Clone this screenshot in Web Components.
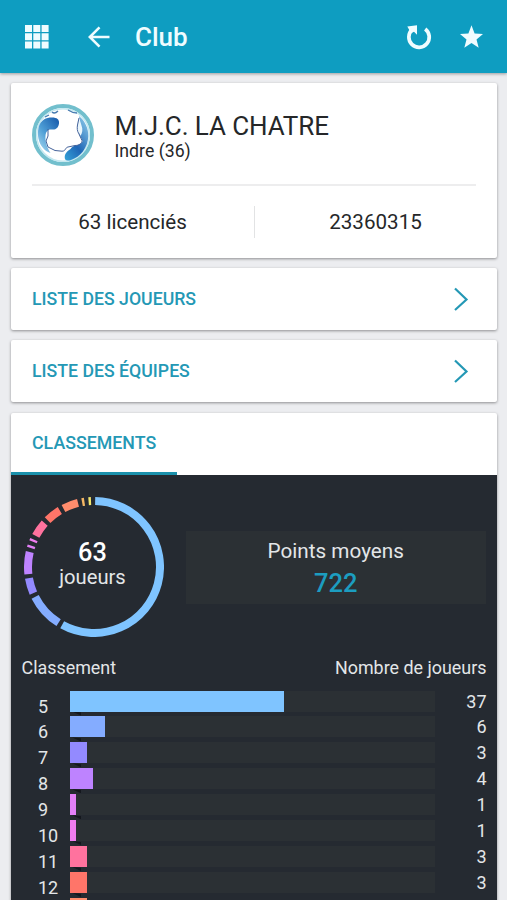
<!DOCTYPE html>
<html lang="fr">
<head>
<meta charset="utf-8">
<meta name="viewport" content="width=device-width, initial-scale=1">
<title>Club</title>
<style>
  html, body {
    margin: 0;
    height: 900px;
    overflow: hidden;
    background: #ecedf0;
    font-family: Roboto, "Liberation Sans", sans-serif;
    color: #252729;
  }
</style>
</head>
<body>
<club-app></club-app>

<script>
class AppToolbar extends HTMLElement {
  constructor() {
    super();
    this.attachShadow({ mode: 'open' });
  }

  connectedCallback() {
    this.shadowRoot.innerHTML = `
      <style>
        :host {
          display: flex;
          align-items: center;
          box-sizing: border-box;
          height: 72.500px;
          padding: 1px 23.500px 0 24px;
          background: #0e9dc1;
          color: #effcff;
          box-shadow: 0 1px 3px rgba(0,0,0,.35);
        }
        svg { display: block; fill: currentColor; flex: none; }
        .back { margin-left: 38px; }
        h1 {
          flex: 1;
          margin: 0 0 0 24px;
          font-size: 26px;
          line-height: 30px;
          font-weight: 500;
        }
        .star { margin-left: 26.500px; }
      </style>
      <svg width="26" height="26" viewBox="0 0 26 26">
        <path d="M1 1h7v7H1zM9.300 1h7v7h-7zM17.600 1h7v7h-7zM1 9.300h7v7H1zM9.300 9.300h7v7h-7zM17.600 9.300h7v7h-7zM1 17.600h7v7H1zM9.300 17.600h7v7h-7zM17.600 17.600h7v7h-7z"/>
      </svg>
      <svg class="back" width="23" height="24" viewBox="0 0 23 24">
        <path d="M11.500 2.300 1.800 12l9.700 9.700M2 12h19.500" fill="none" stroke="currentColor" stroke-width="2.600"/>
      </svg>
      <h1><slot></slot></h1>
      <svg width="26" height="26" viewBox="0 0 26 26">
        <path d="M6.300 5.500A10.200 10.200 0 1 0 19.200 5" fill="none" stroke="currentColor" stroke-width="3.700"/>
        <path d="M1.300 2.500 11 1.200v9.600L8 7.800 5 9z"/>
      </svg>
      <svg class="star" width="25" height="26" viewBox="0 0 25 26">
        <path d="M12.500 1.200 15.600 9.500l8.400.4-6.500 5.500 2.200 8.300-7.200-4.700-7.200 4.700 2.200-8.300L1 9.900l8.400-.4z"/>
      </svg>
    `;
  }
}

class PanelCard extends HTMLElement {
  constructor() {
    super();
    this.attachShadow({ mode: 'open' });
    this.shadowRoot.innerHTML = `
      <style>
        :host {
          display: block;
          background: #fff;
          border-radius: 2px;
          box-shadow: 0 1px 3px rgba(0,0,0,.4);
        }
      </style>
      <slot></slot>
    `;
  }
}

class ClubLogo extends HTMLElement {
  constructor() {
    super();
    this.attachShadow({ mode: 'open' });
    this.shadowRoot.innerHTML = `
      <style>
        :host { display: block; width: 62px; height: 62px; }
        svg { display: block; }
      </style>
      <svg width="62" height="62" viewBox="0 0 62 62">
        <defs>
          <linearGradient id="west" x1="0" y1="1" x2=".8" y2="0">
            <stop offset="0" stop-color="#b5e0f2"/>
            <stop offset=".5" stop-color="#4f9fd6"/>
            <stop offset="1" stop-color="#1d62b0"/>
          </linearGradient>
          <linearGradient id="east" x1="0" y1="1" x2=".7" y2="0">
            <stop offset="0" stop-color="#35a3d8"/>
            <stop offset=".45" stop-color="#1f66b6"/>
            <stop offset="1" stop-color="#7dbde3"/>
          </linearGradient>
        </defs>
        <circle cx="31" cy="31" r="29" fill="#fff" stroke="#72bfcd" stroke-width="4"/>
        <circle cx="31" cy="31" r="26.300" fill="none" stroke="#c4e8f1" stroke-width="1.500"/>
        <path d="M7 22C9 16 14 13.500 20 13.500c5 0 7.500 2 7 6-.5 4-3 6.500-7 6-3-.5-6 1-6.500 6-.5 6 1 11 5 17.500C9 46 3.500 34 7 22z" fill="url(#west)"/>
        <path d="M47 12c6 5 9.500 12 9.300 20C56 44 48 53 39 56c-4 1.200-6.500.5-6.300-3 .3-4 3-6 5.800-8 1-2 3-3 5-3.500 3-.5 6-1.500 7-4 0-3-3-5-3.500-8 2-6 1-11 0-17.500z" fill="url(#east)"/>
        <path d="M47 14c-2 4-2.500 8-1.500 11 .5 3 2 4.500 3 7 2-3 2.500-7 1-10.500C48.500 18.500 48 16 47 14z" fill="#eaf6fc"/>
        <path d="M16 25v7l-2 5 2 6 7 3.500 7 .7c4 0 3-3.700 6-4.200l7-1.500c4 0 7-2 7-5l-3-6.500c-2-3-2-6-1.500-9L47 14" fill="none" stroke="#45639b" stroke-width="1"/>
        <path d="M13 13l4-2M20 8c2 2 4 1 6-1M36 6c3 2 6 3 9 3" fill="none" stroke="#477bb0" stroke-width="1.300"/>
      </svg>
    `;
  }
}

class ClubSummary extends HTMLElement {
  constructor() {
    super();
    this.attachShadow({ mode: 'open' });
  }

  connectedCallback() {
    this.shadowRoot.innerHTML = `
      <style>
        :host {
          display: block;
          box-sizing: border-box;
          height: 175px;
          padding: 20px 21px 0;
        }
        .identity {
          display: flex;
          gap: 20.500px;
          height: 81px;
          border-bottom: 2px solid #ededee;
        }
        club-logo { margin-top: .5px; }
        h2, p { margin: 0; font-weight: 400; }
        h2 { margin-top: 8px; font-size: 26px; line-height: 30px; letter-spacing: -.1px; }
        p { font-size: 17.700px; line-height: 20px; }
        .facts {
          display: grid;
          grid-template-columns: 223px 1fr;
          margin-top: 20px;
          font-size: 20.600px;
          line-height: 32px;
          text-align: center;
        }
        .facts > :first-child {
          padding-right: 21px;
          border-right: 1px solid #e2e3e4;
        }
        .facts > :last-child { padding-left: 20px; }
      </style>
      <div class="identity">
        <club-logo></club-logo>
        <div>
          <h2>${this.getAttribute('data-name')}</h2>
          <p>${this.getAttribute('data-area')}</p>
        </div>
      </div>
      <div class="facts">
        <div>${this.getAttribute('data-members')}</div>
        <div>${this.getAttribute('data-number')}</div>
      </div>
    `;
  }
}

class NavLink extends HTMLElement {
  constructor() {
    super();
    this.attachShadow({ mode: 'open' });
    this.shadowRoot.innerHTML = `
      <style>
        :host {
          display: flex;
          align-items: center;
          justify-content: space-between;
          height: 62px;
          padding: 0 28px 0 21px;
          color: #2498b5;
          font-size: 17.700px;
          font-weight: 500;
          line-height: 22px;
        }
        svg { display: block; }
      </style>
      <span><slot></slot></span>
      <svg width="16" height="24" viewBox="0 0 16 24">
        <path d="M2 1.500 13.500 12.500 2 23" fill="none" stroke="currentColor" stroke-width="2.200"/>
      </svg>
    `;
  }
}

class PlayerDonut extends HTMLElement {
  constructor() {
    super();
    this.attachShadow({ mode: 'open' });
  }

  set levels(levels) {
    const total = levels.reduce((sum, l) => sum + l.count, 0);
    const point = deg => {
      const a = deg * Math.PI / 180;
      return `${(70 + 66 * Math.sin(a)).toFixed(2)} ${(70 - 66 * Math.cos(a)).toFixed(2)}`;
    };
    let angle = 0;
    const arcs = levels.map(l => {
      const from = angle + 1;
      angle += l.count / total * 360;
      const to = angle - 2.6;
      return `<path d="M${point(from)}A66 66 0 ${to - from > 180 ? 1 : 0} 1 ${point(to)}" stroke="${l.color}"/>`;
    }).join('');

    this.shadowRoot.innerHTML = `
      <style>
        :host {
          display: grid;
          place-items: center;
          width: 140px;
          height: 140px;
        }
        svg, .label { grid-area: 1 / 1; }
        svg { fill: none; stroke-width: 8px; }
        .label { padding: 0 2px 5px 0; text-align: center; color: #e3e6e8; font-size: 20.200px; line-height: 23px; }
        strong { display: block; color: #fff; font-size: 25.300px; line-height: 26px; font-weight: 500; }
      </style>
      <svg width="140" height="140" viewBox="0 0 140 140">${arcs}</svg>
      <div class="label"><strong>${total}</strong>joueurs</div>
    `;
  }
}

class LevelRow extends HTMLElement {
  constructor() {
    super();
    this.attachShadow({ mode: 'open' });
  }

  set level(level) {
    this.shadowRoot.innerHTML = `
      <style>
        :host {
          display: grid;
          grid-template-columns: 32px 365px 1fr;
          height: 25.930px;
          padding: 0 10.500px 0 27px;
          font-size: 18px;
          line-height: 21px;
        }
        .name { padding-top: 5px; }
        .track { height: 21px; background: #2b3034; }
        .bar { height: 21px; width: ${level.count / 63 * 100}%; background: ${level.color}; }
        .notch {
          width: 11px;
          height: 4px;
          background: #14171d;
          clip-path: polygon(20% 0, 100% 20%, 100% 100%);
        }
        .count { text-align: right; }
      </style>
      <span class="name">${level.name}</span>
      <div class="track"><div class="bar"></div><div class="notch"></div></div>
      <span class="count">${level.count}</span>
    `;
  }
}

class RankingPanel extends HTMLElement {
  constructor() {
    super();
    this.attachShadow({ mode: 'open' });
    this.shadowRoot.innerHTML = `
      <style>
        :host { display: block; }
        .tabs { height: 62px; display: flex; }
        .tab {
          box-sizing: border-box;
          width: 166px;
          padding: 0 0 0 21px;
          border-bottom: 3px solid #1b91ac;
          color: #2498b5;
          font-size: 17.800px;
          line-height: 60px;
          font-weight: 500;
        }
        .stats { height: 440px; background: #252a31; color: #e3e6e8; }
        .overview { display: flex; gap: 22px; padding: 22.500px 11px 0 12.500px; }
        .average {
          flex: 1;
          height: 73px;
          margin-top: 34px;
          background: #2b3034;
          text-align: center;
          font-size: 20.700px;
        }
        .average p { margin: 7.500px 0 0; line-height: 24px; }
        .average strong {
          display: block;
          margin-top: 5.500px;
          color: #1c9dc0;
          font-size: 25.500px;
          line-height: 30px;
          font-weight: 500;
        }
        .heads {
          display: flex;
          justify-content: space-between;
          padding: 20px 10.500px 0;
          font-size: 17.900px;
          line-height: 22px;
        }
        .rows { padding-top: 11.500px; }
        .next {
          width: 17px;
          height: 4px;
          margin-left: 59px;
          background: #ff8c6c;
        }
      </style>
      <div class="tabs"><div class="tab">CLASSEMENTS</div></div>
      <div class="stats">
        <div class="overview">
          <player-donut></player-donut>
          <div class="average"><p>Points moyens</p><strong>722</strong></div>
        </div>
        <div class="heads"><span>Classement</span><span>Nombre de joueurs</span></div>
        <div class="rows"></div>
        <div class="next"></div>
      </div>
    `;
  }

  connectedCallback() {
    const levels = [
      { name: '5', count: 37, color: '#7fc4ff' },
      { name: '6', count: 6, color: '#84acff' },
      { name: '7', count: 3, color: '#938aff' },
      { name: '8', count: 4, color: '#be83ff' },
      { name: '9', count: 1, color: '#e380f8' },
      { name: '10', count: 1, color: '#f07df0' },
      { name: '11', count: 3, color: '#ff729e' },
      { name: '12', count: 3, color: '#ff7569' },
      { name: '13', count: 3, color: '#ff8c6c' },
      { name: '14', count: 1, color: '#f5b765' },
      { name: '15', count: 1, color: '#f3e66e' }
    ];
    this.shadowRoot.querySelector('player-donut').levels = levels;
    const rows = this.shadowRoot.querySelector('.rows');
    // only levels up to 12 fit, .next is the top of the bar that follows
    levels.slice(0, 8).forEach(level => {
      const row = document.createElement('level-row');
      row.level = level;
      rows.append(row);
    });
  }
}

class ClubApp extends HTMLElement {
  constructor() {
    super();
    this.attachShadow({ mode: 'open' });
    this.shadowRoot.innerHTML = `
      <style>
        :host { display: block; height: 900px; overflow: hidden; }
        main { display: grid; gap: 10px; padding: 10.500px 10px 0 11px; }
        panel-card:nth-child(3) { margin-bottom: .5px; }
      </style>
      <app-toolbar>Club</app-toolbar>
      <main>
        <panel-card>
          <club-summary data-name="M.J.C. LA CHATRE" data-area="Indre (36)"
            data-members="63 licenciés" data-number="23360315"></club-summary>
        </panel-card>
        <panel-card><nav-link>LISTE DES JOUEURS</nav-link></panel-card>
        <panel-card><nav-link>LISTE DES ÉQUIPES</nav-link></panel-card>
        <panel-card><ranking-panel></ranking-panel></panel-card>
      </main>
    `;
  }
}

customElements.define('app-toolbar', AppToolbar);
customElements.define('panel-card', PanelCard);
customElements.define('club-logo', ClubLogo);
customElements.define('club-summary', ClubSummary);
customElements.define('nav-link', NavLink);
customElements.define('player-donut', PlayerDonut);
customElements.define('level-row', LevelRow);
customElements.define('ranking-panel', RankingPanel);
customElements.define('club-app', ClubApp);
</script>
</body>
</html>
